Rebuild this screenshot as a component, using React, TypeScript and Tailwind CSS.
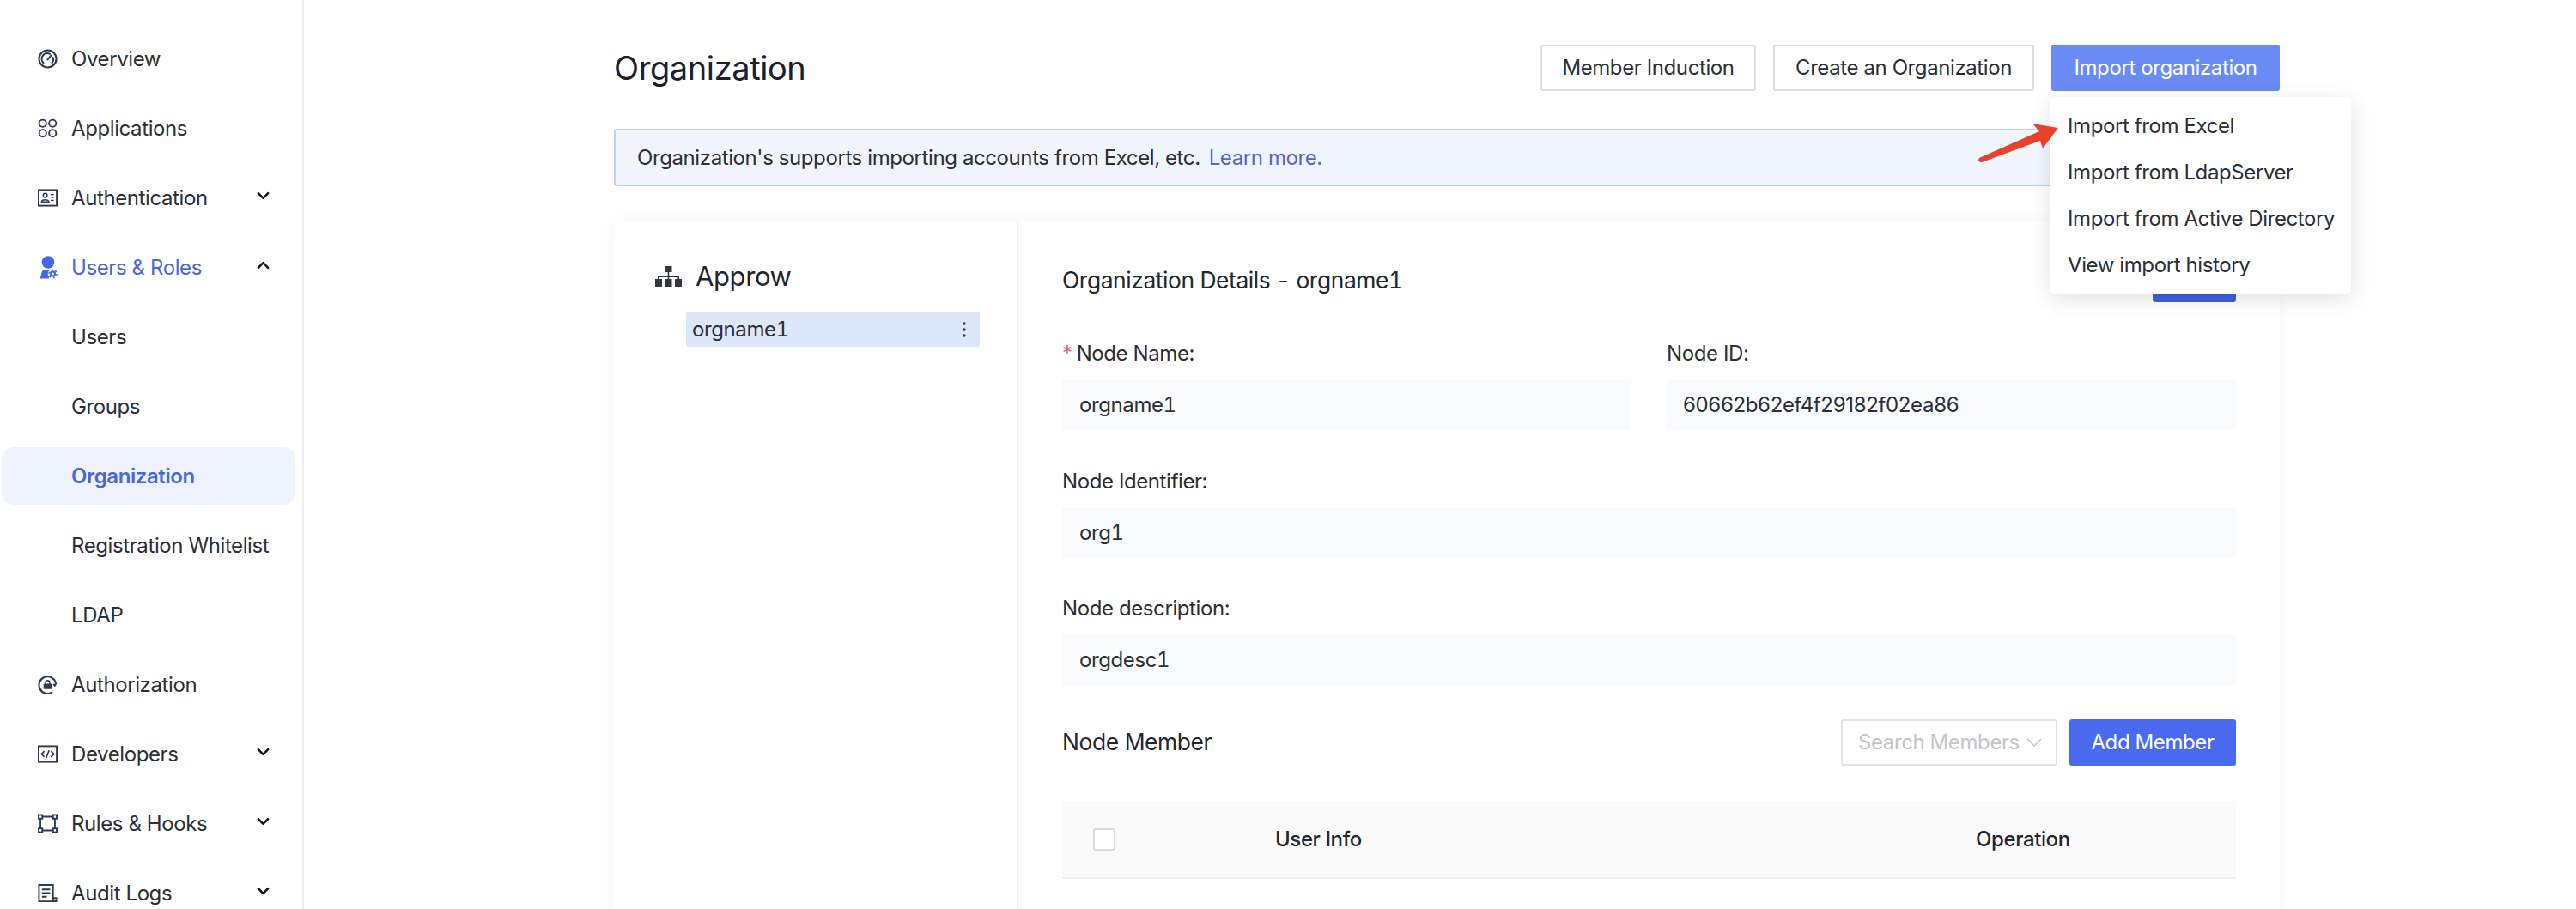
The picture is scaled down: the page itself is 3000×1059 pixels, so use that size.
import React from "react";

const ic = "w-[23px] h-[23px] text-[#2f3a52] shrink-0";

const Overview = () => (
  <svg viewBox="0 0 24 24" className={ic} fill="none" stroke="currentColor" strokeWidth="2.200" strokeLinecap="round">
    <circle cx="12" cy="12" r="10.5" />
    <path d="M6.800 17a6.800 6.800 0 0 1 7.700-11" />
    <path d="M18.500 10.500a6.800 6.800 0 0 1-1.300 6.500" />
    <path d="M12 13l4-5" />
  </svg>
);
const Apps = () => (
  <svg viewBox="0 0 24 24" className={ic} fill="none" stroke="currentColor" strokeWidth="2">
    <circle cx="6" cy="6" r="4.300" />
    <circle cx="18" cy="6" r="4.300" />
    <circle cx="6" cy="18" r="4.300" />
    <circle cx="18" cy="18" r="4.300" />
  </svg>
);
const AuthIc = () => (
  <svg viewBox="0 0 24 24" className={ic} fill="none" stroke="currentColor" strokeWidth="2">
    <rect x="1" y="2.500" width="22" height="19" />
    <circle cx="9" cy="9" r="2.400" strokeWidth="1.500" />
    <path d="M4.500 17c.5-3.500 8.500-3.500 9 0z" strokeWidth="1.500" />
    <path d="M15.500 8h4M16.500 11.500h3M15.500 15h4" strokeWidth="1.300" />
  </svg>
);
const UsersIc = () => (
  <svg viewBox="0 0 24 27" className="w-[24px] h-[27px] text-[#4467e8] shrink-0" fill="currentColor">
    <circle cx="12" cy="7.500" r="7.300" />
    <path d="M2.700 26.500 4.500 19.500Q5 16.500 8 16.500H13V26.500z" />
    <circle cx="17.500" cy="21" r="5.800" fill="#fff" />
    <circle cx="17.500" cy="21" r="3.700" />
    <circle cx="17.500" cy="21" r="4.600" fill="none" stroke="currentColor" strokeWidth="1.500" strokeDasharray="2 2.820" />
    <circle cx="17.500" cy="21" r="1.500" fill="#fff" />
  </svg>
);
const AuthzIc = () => (
  <svg viewBox="0 0 24 24" className={ic} fill="none" stroke="currentColor" strokeWidth="2.200" strokeLinecap="round">
    <path d="M21.800 10A10.300 10.300 0 1 0 17 21.500" />
    <path d="M23.500 10.500 20.800 15 18 11.500z" fill="currentColor" stroke="none" />
    <rect x="7" y="11" width="10" height="6.500" rx="1" fill="currentColor" stroke="none" />
    <path d="M9.500 11V9.500a2.500 2.500 0 0 1 5 0V11" strokeWidth="1.600" />
  </svg>
);
const DevIc = () => (
  <svg viewBox="0 0 24 24" className={ic} fill="none" stroke="currentColor" strokeWidth="2">
    <rect x="1" y="2.500" width="22" height="19" />
    <path d="M8 8.500 4.500 12 8 15.500M16 8.500 19.500 12 16 15.500M13.700 7.500l-3.400 9" strokeWidth="1.800" />
  </svg>
);
const RulesIc = () => (
  <svg viewBox="0 0 24 24" className={ic} fill="none" stroke="currentColor" strokeWidth="2">
    <rect x="1" y="1.500" width="4.500" height="4.500" />
    <rect x="18.500" y="1.500" width="4.500" height="4.500" />
    <rect x="1" y="18" width="4.500" height="4.500" />
    <rect x="18.500" y="18" width="4.500" height="4.500" />
    <path d="M5.500 3.700h13M5.500 20.300h13M3.200 6v12M20.800 6v12" />
  </svg>
);
const AuditIc = () => (
  <svg viewBox="0 0 24 24" className={ic} fill="none" stroke="currentColor" strokeWidth="2">
    <path d="M18.500 19V2H1.500v20h19" />
    <path d="M5 7.500h10M5 12h10M5 16.500h6" />
    <rect x="18.500" y="18" width="4" height="4" />
  </svg>
);

const Chevron = ({ up }: { up?: boolean }) => (
  <svg viewBox="0 0 16 10" className="w-[15px] h-[10px] text-[#15181f] shrink-0" fill="none" stroke="currentColor" strokeWidth="2.800" strokeLinecap="round" strokeLinejoin="round">
    <path d={up ? "M2 8l6-6 6 6" : "M2 2l6 6 6-6"} />
  </svg>
);

type Item = { label: string; icon?: React.ReactNode; chev?: "up" | "down"; active?: boolean; open?: boolean };
const items: Item[] = [
  { label: "Overview", icon: <Overview /> },
  { label: "Applications", icon: <Apps /> },
  { label: "Authentication", icon: <AuthIc />, chev: "down" },
  { label: "Users & Roles", icon: <UsersIc />, chev: "up", open: true },
  { label: "Users" },
  { label: "Groups" },
  { label: "Organization", active: true },
  { label: "Registration Whitelist" },
  { label: "LDAP" },
  { label: "Authorization", icon: <AuthzIc /> },
  { label: "Developers", icon: <DevIc />, chev: "down" },
  { label: "Rules & Hooks", icon: <RulesIc />, chev: "down" },
  { label: "Audit Logs", icon: <AuditIc />, chev: "down" },
];

const Field = ({ label, value, req, id }: { label: string; value: string; req?: boolean; id?: boolean }) => (
  <div className="flex-1 min-w-0">
    <div className="h-[30px] flex items-center text-[24px] text-[#2b2f36] mb-[16px]">
      {req && <span className="text-[#e0606a] mr-[5px]">*</span>}
      {label}
    </div>
    <div
      className={`h-[58px] flex items-center bg-[#fafbfc] text-[24px] text-[#2b2f36] rounded-[2px] ${
        id ? "pl-[19px] tracking-[-0.014em]" : "pl-[20px] tabular-nums"
      }`}
    >
      {value}
    </div>
  </div>
);

export default function App() {
  return (
    <div className="flex h-[1059px] w-[3000px] overflow-hidden bg-white font-['Inter',sans-serif] text-[#2b2f36] tracking-[-0.025em]">
      <aside className="w-[354px] shrink-0 border-r-2 border-[#eceef3] pt-[35px] pl-[2px] pr-[8px] flex flex-col gap-[14px]">
        {items.map((it) => (
          <div
            key={it.label}
            className={`h-[67px] shrink-0 flex items-center pl-[42px] pr-[30px] rounded-[14px] text-[24px] ${
              it.active ? "bg-[#eef3fd] text-[#4a68d8] font-semibold" : it.open ? "text-[#4a68d8]" : "text-[#2b2f36]"
            }`}
          >
            <span className="w-[39px] shrink-0 flex items-center">{it.icon}</span>
            <span className="flex-1 whitespace-nowrap">{it.label}</span>
            {it.chev && <span className="-mt-[6px]"><Chevron up={it.chev === "up"} /></span>}
          </div>
        ))}
      </aside>

      <main className="pl-[361px] w-[2301px] shrink-0">
        <div className="w-[1940px] relative">
          <div className="pt-[52px] flex items-center justify-between h-[106px]">
            <h1 className="text-[38px] leading-[54px] text-[#1d2026] font-normal">Organization</h1>
            <div className="flex gap-[20px]">
              <button className="h-[54px] w-[251px] border-2 border-[#dcdee3] rounded-[3px] text-[24px] text-[#2b2f36] bg-white">Member Induction</button>
              <button className="h-[54px] w-[304px] border-2 border-[#dcdee3] rounded-[3px] text-[24px] text-[#2b2f36] bg-white">Create an Organization</button>
              <button className="h-[54px] w-[266px] rounded-[3px] text-[24px] text-white bg-[#6a8af5]">Import organization</button>
            </div>
          </div>

          <div className="mt-[44px] h-[67px] bg-[#f1f5fd] border-2 border-[#bfd0f0] rounded-[3px] flex items-center pl-[25px] text-[24px] text-[#2b2f36]">
            Organization's supports importing accounts from Excel, etc.
            <span className="text-[#4a68d8] ml-[10px]">Learn more.</span>
          </div>

          <div className="mt-[41px] flex h-[900px] bg-white shadow-[0_0_16px_rgba(0,0,0,0.04)]">
            <div className="w-[471px] shrink-0 border-r-2 border-[#f0f1f3] pt-[44px] pl-[48px] pr-[43px]">
              <div className="flex items-center h-[40px] text-[31px] text-[#22252b]">
                <svg viewBox="0 0 31 24" className="w-[31px] h-[24px] mr-[16px] text-[#33363b]" fill="currentColor">
                  <rect x="11.500" y="0" width="8" height="7" />
                  <rect x="0" y="15" width="8" height="9" />
                  <rect x="11.500" y="15" width="8" height="9" />
                  <rect x="23" y="15" width="8" height="9" />
                  <path d="M14.700 7h1.600v4.500H28V15h-1.600v-2H16.300v2h-1.600v-2H4.600v2H3v-3.500h11.700z" />
                </svg>
                Approw
              </div>
              <div className="mt-[21px] ml-[36px] h-[41px] bg-[#dce7fa] rounded-[3px] flex items-center justify-between pl-[7px] pr-[16px] text-[24px] text-[#2b2f36] tabular-nums">
                orgname1
                <svg viewBox="0 0 4 20" className="w-[4px] h-[20px] text-[#33363b]" fill="currentColor">
                  <circle cx="2" cy="3" r="1.700" />
                  <circle cx="2" cy="10" r="1.700" />
                  <circle cx="2" cy="17" r="1.700" />
                </svg>
              </div>
            </div>

            <div className="flex-1 min-w-0 pl-[51px] pr-[51px]">
              <div className="pt-[40px] h-[136px] flex items-start justify-between">
                <span className="text-[26.400px] leading-[56px] text-[#23262c] tabular-nums">Organization Details - orgname1</span>
                <button className="w-[97px] h-[54px] bg-[#3f5fe0] rounded-[3px]" />
              </div>
              <div className="flex gap-[41px] mt-[3px]">
                <Field label="Node Name:" value="orgname1" req />
                <Field label="Node ID:" value="60662b62ef4f29182f02ea86" id />
              </div>
              <div className="mt-[45px]"><Field label="Node Identifier:" value="org1" /></div>
              <div className="mt-[44px]"><Field label="Node description:" value="orgdesc1" /></div>

              <div className="mt-[40px] h-[54px] flex items-center">
                <span className="flex-1 text-[26.400px] text-[#23262c]">Node Member</span>
                <div className="w-[252px] h-[54px] border-2 border-[#e2e3e6] rounded-[3px] flex items-center justify-between pl-[18px] pr-[16px] text-[24px] text-[#c3c5c9]">
                  Search Members
                  <svg viewBox="0 0 18 10" className="w-[18px] h-[10px]" fill="none" stroke="currentColor" strokeWidth="1.600"><path d="M1 1l8 8 8-8" /></svg>
                </div>
                <button className="ml-[14px] w-[194px] h-[54px] bg-[#4a6bf0] rounded-[3px] text-[24px] text-white">Add Member</button>
              </div>

              <div className="mt-[41px] h-[91px] bg-[#fafafa] border-b-2 border-[#f0f0f0] flex items-center text-[24px] font-medium text-[#23262c]">
                <span className="ml-[36px] w-[26px] h-[26px] bg-white border-2 border-[#d9d9d9] rounded-[3px]" />
                <span className="ml-[186px] w-[816px]">User Info</span>
                <span>Operation</span>
              </div>
            </div>
          </div>

          <div className="absolute left-[1673px] top-[113px] w-[350px] h-[229px] bg-white rounded-[4px] shadow-[0_6px_24px_rgba(0,0,0,0.12)] pt-[7px] pl-[20px] text-[24px] text-[#2b2f36]">
            <div className="h-[54px] flex items-center whitespace-nowrap">Import from Excel</div>
            <div className="h-[54px] flex items-center whitespace-nowrap">Import from LdapServer</div>
            <div className="h-[54px] flex items-center whitespace-nowrap">Import from Active Directory</div>
            <div className="h-[54px] flex items-center whitespace-nowrap">View import history</div>
          </div>

          <svg viewBox="0 0 100 52" className="absolute left-[1585px] top-[140px] w-[100px] h-[52px]" fill="#e8432a">
            <path d="M5 44 L75 13 L67 4 L97 9 L79 33 L76 24 L8 49 Q2 49 5 44 Z" />
          </svg>
        </div>
      </main>
    </div>
  );
}
